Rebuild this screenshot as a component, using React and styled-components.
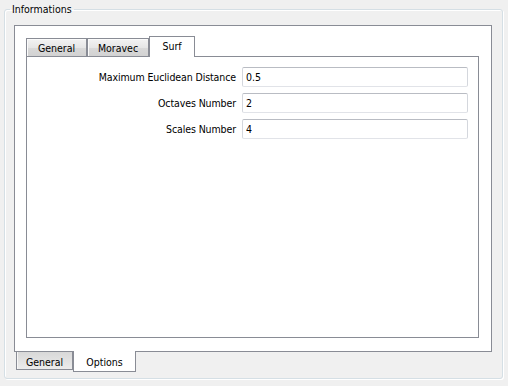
import styled, { createGlobalStyle } from 'styled-components';

const GlobalStyle = createGlobalStyle`
	html, body {
		margin: 0;
		padding: 0;
		background: #f0f0f0;
	}
	body {
		font-family: "DejaVu Sans Condensed", "DejaVu Sans", sans-serif;
		font-size: 10.5px;
		color: #000;
	}
`;

const Page = styled.div`
	width: 508px;
	height: 386px;
	box-sizing: border-box;
	padding: 3px 5px 0 4px;
`;

const GroupBox = styled.fieldset`
	margin: 0;
	width: 499px;
	box-sizing: border-box;
	padding: 9px 10px 7px 9px;
	border: 1px solid #d5dfe5;
	border-radius: 3px;
	box-shadow: inset 1px 1px 0 #fff, 1px 1px 0 #fff;
`;

const Legend = styled.legend`
	margin-left: -4px;
	padding: 0 2px;
	line-height: 13px;
`;

const TabWidget = styled.div`
	display: flex;
	flex-direction: column;
`;

const Pane = styled.div`
	box-sizing: border-box;
	position: relative;
	background: #fff;
	border: 1px solid #898c95;
	width: ${(p) => p.$width}px;
	height: ${(p) => p.$height}px;
	padding: ${(p) => p.$padding || '0'};
`;

const TabBar = styled.div`
	display: flex;
	align-items: ${(p) => (p.$south ? 'flex-start' : 'flex-end')};
	height: 20px;
	padding-left: ${(p) => p.$offset || 0}px;
	position: relative;
	z-index: 1;
	${(p) => p.$south && 'margin-top: -1px;'}
`;

const Tab = styled.div`
	box-sizing: border-box;
	width: ${(p) => p.$width}px;
	text-align: center;
	line-height: 13px;
	border: 1px solid #898c95;
	white-space: nowrap;
	${(p) =>
		p.$south
			? `
		border-top: none;
		padding-top: ${p.$active ? 5 : 4}px;
		height: ${p.$active ? 21 : 18}px;
		margin-top: ${p.$active ? 0 : 1}px;
		background: ${
			p.$active
				? '#fff'
				: 'linear-gradient(to bottom, #d8d8d8, #ececec)'
		};
		box-shadow: ${p.$active ? 'none' : 'inset 1px 0 0 #f6f6f6'};
	`
			: `
		border-bottom: none;
		padding-top: 3px;
		height: ${p.$active ? 21 : 18}px;
		margin-bottom: ${p.$active ? -1 : 0}px;
		background: ${
			p.$active
				? '#fff'
				: 'linear-gradient(to bottom, #f3f3f3, #e6e6e6 50%, #d9d9d9 51%, #d2d2d2)'
		};
		box-shadow: ${p.$active ? 'none' : 'inset 1px 1px 0 #fbfbfb'};
	`}
	& + & {
		margin-left: ${(p) => p.$gap ?? 0}px;
	}
`;

const Form = styled.div`
	display: grid;
	grid-template-columns: 209px 1fr;
	column-gap: 6px;
	row-gap: 6px;
	padding: 10px 10px 0 0;
`;

const Label = styled.label`
	text-align: right;
	line-height: 20px;
	white-space: nowrap;
	letter-spacing: -0.1px;
`;

const Field = styled.input`
	box-sizing: border-box;
	height: 20px;
	margin: 0;
	padding: 0 3px;
	font: inherit;
	color: #000;
	background: #fff;
	border: 1px solid #e1e3e8;
	border-top-color: #b9bcc3;
	border-left-color: #d4d7dd;
	border-right-color: #d4d7dd;
	border-radius: 2px;
	outline: none;
`;

const innerTabs = [
	{ name: 'General', width: 61 },
	{ name: 'Moravec', width: 62 },
	{ name: 'Surf', width: 46, active: true },
];

const fields = [
	{ label: 'Maximum Euclidean Distance', value: '0.5' },
	{ label: 'Octaves Number', value: '2' },
	{ label: 'Scales Number', value: '4' },
];

function FieldRow({ label, value }) {
	return (
		<>
			<Label>{label}</Label>
			<Field defaultValue={value} readOnly />
		</>
	);
}

export default function App() {
	return (
		<>
			<GlobalStyle />
			<Page>
				<GroupBox>
					<Legend>Informations</Legend>
					<TabWidget>
						<Pane $width={478} $height={327} $padding="10px 12px 13px 11px">
							<TabWidget>
								<TabBar>
									{innerTabs.map((t) => (
										<Tab key={t.name} $width={t.width} $active={t.active} $gap={1}>
											{t.name}
										</Tab>
									))}
								</TabBar>
								<Pane $width={453} $height={282}>
									<Form>
										{fields.map((f) => (
											<FieldRow key={f.label} {...f} />
										))}
									</Form>
								</Pane>
							</TabWidget>
						</Pane>
						<TabBar $south $offset={2}>
							<Tab $south $width={57}>General</Tab>
							<Tab $south $active $width={63}>Options</Tab>
						</TabBar>
					</TabWidget>
				</GroupBox>
			</Page>
		</>
	);
}
